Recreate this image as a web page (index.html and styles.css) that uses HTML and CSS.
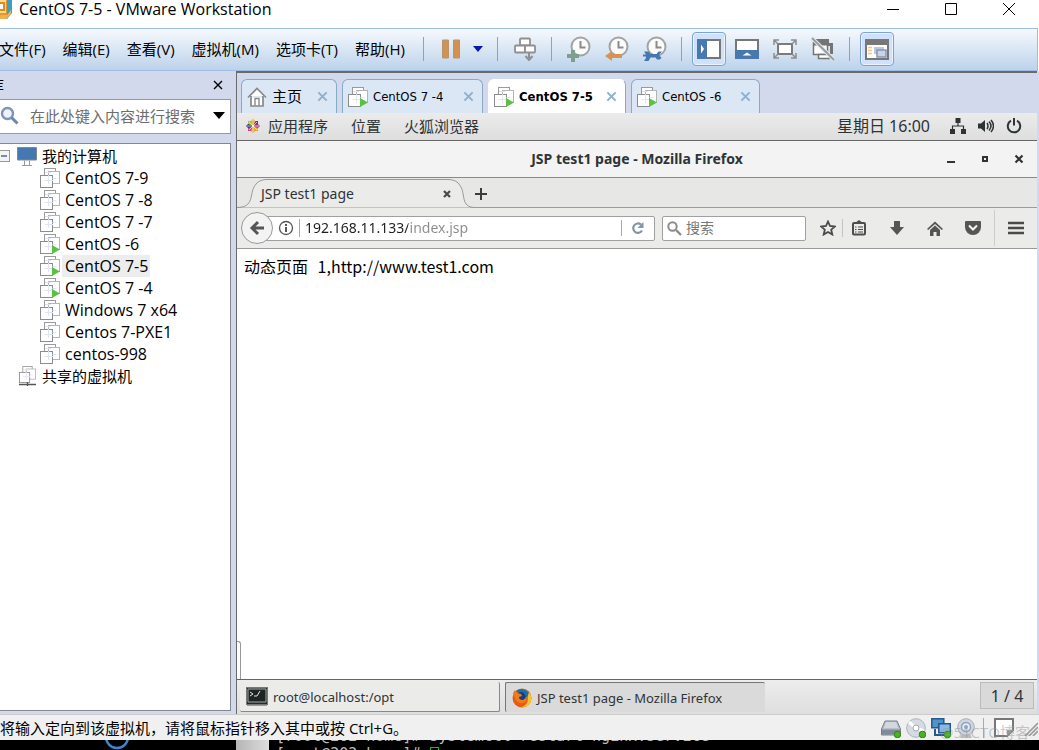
FILE: index.html
```html
<!DOCTYPE html>
<html lang="zh-CN">
<head>
<meta charset="utf-8">
<title>CentOS 7-5 - VMware Workstation</title>
<link rel="stylesheet" href="styles.css">
</head>
<body>
<svg class="defs" aria-hidden="true">
  <symbol id="vm" viewBox="0 0 20 20">
    <g fill="#fff" stroke="#9a9a9a" stroke-width="1"><rect x="4.500" y=".5" width="11" height="12"/><rect x="8.500" y="3.500" width="11" height="12" stroke="#b4b4b4"/><rect x=".5" y="7.500" width="12" height="12" stroke="#8c8c8c"/></g>
    <path d="M4.500 12.500h8.500M8.500 7v9M5 4.500h6M12.500 10.500h4" stroke="#dfe5f2" fill="none"/>
  </symbol>
  <symbol id="vm-on" viewBox="0 0 20 20">
    <use href="#vm"/><path d="M12 11l8 4.500-8 4.500z" fill="#5cc043"/>
  </symbol>
  <symbol id="cross" viewBox="0 0 12 12"><path d="M1.500 1.500l9 9M10.500 1.500l-9 9" stroke="#8db1d0" stroke-width="2.200" fill="none"/></symbol>
  <symbol id="clock" viewBox="0 0 26 26">
    <circle cx="14.500" cy="10.500" r="9" fill="#fbfbfb" stroke="#a3a3a3" stroke-width="2"/><path d="M14.500 5v6.500h5" fill="none" stroke="#8b8b8b" stroke-width="2"/>
  </symbol>
</svg>

<header class="titlebar">
  <svg class="app-icon" width="24" height="24" viewBox="0 0 24 24"><path d="M1 1h19l3 3v13l-5 6H1z" fill="#3aa0c8"/><path d="M1 1h17v18H1z" fill="#e8962a"/><path d="M3 4h14v13H3z" fill="#f8dd9a"/><path d="M6 6h10v9H6z" fill="#e58a18"/><path d="M9 8h5v5H9z" fill="#fff"/><path d="M1 19h17l4-5v4l-5 5H1z" fill="#f0b04a"/></svg>
  <h1>CentOS 7-5 - VMware Workstation</h1>
  <div class="win-controls">
    <button aria-label="最小化"><svg width="14" height="14"><path d="M1 7.500h12" stroke="#000"/></svg></button>
    <button aria-label="最大化"><svg width="14" height="14"><path d="M1.500 1.500h11v11h-11z" stroke="#000" fill="none"/></svg></button>
    <button aria-label="关闭"><svg width="14" height="14"><path d="M1 1l12 12M13 1L1 13" stroke="#000"/></svg></button>
  </div>
</header>

<div class="menubar">
  <nav class="menus">
    <button>文件(F)</button><button>编辑(E)</button><button>查看(V)</button><button>虚拟机(M)</button><button>选项卡(T)</button><button>帮助(H)</button>
  </nav>
  <div class="tools">
    <span class="sep"></span>
    <div class="group tight">
      <button aria-label="暂停"><svg width="20" height="20"><path d="M1.500 1h6v18h-6zM12.500 1h6v18h-6z" fill="#d29350" stroke="#b5956e"/></svg></button>
      <button class="slim" aria-label="电源选项"><svg width="10" height="6"><path d="M0 0h10l-5 6z" fill="#0a17b0"/></svg></button>
    </div>
    <span class="sep"></span>
    <button aria-label="发送按键"><svg width="24" height="24"><g fill="#fff" stroke="#8f8f8f" stroke-width="1.800"><rect x="7" y="1.500" width="10" height="7" rx="1"/><rect x="2" y="8.500" width="10" height="7" rx="1"/><rect x="12" y="8.500" width="10" height="7" rx="1"/></g><path d="M16 15v6M12.500 19l3.500 4 3.500-4" fill="none" stroke="#8f8f8f" stroke-width="2"/></svg></button>
    <span class="sep"></span>
    <div class="group">
      <button aria-label="拍摄快照"><svg width="26" height="26"><use href="#clock"/><path d="M5 14h4v4h4v4H9v4H5v-4H1v-4h4z" fill="#7c9f90"/></svg></button>
      <button aria-label="恢复快照"><svg width="26" height="26"><use href="#clock"/><path d="M1 20l7-5v3h10v4H8v3z" fill="#d5944f"/></svg></button>
      <button aria-label="管理快照"><svg width="26" height="26"><use href="#clock"/><path d="M2 15.500h4.500l2 2.500h6l2-2.500H20l-2.500 2.500v2l2 1.500-1.500 2h-3l-1.500-2H8.500l-2 3.500H2l2-3v-1.500H1v-2h3z" fill="#4778ad"/></svg></button>
    </div>
    <span class="sep"></span>
    <div class="group">
      <button class="on" aria-label="显示库"><svg width="24" height="20"><rect x="1" y="1" width="22" height="18" fill="#fff" stroke="#777" stroke-width="2"/><path d="M0 0h10v20H0z" fill="#4779ad"/><path d="M4 5.500l3 4.500-3 4.500z" fill="#fff"/></svg></button>
      <button aria-label="缩略图栏"><svg width="24" height="20"><rect x="1" y="1" width="22" height="18" fill="#fff" stroke="#777" stroke-width="2"/><path d="M0 11h24v9H0z" fill="#4779ad"/><path d="M7.500 16.500l4.500-3 4.500 3z" fill="#fff"/></svg></button>
      <button aria-label="全屏"><svg width="24" height="20"><rect x="5" y="5" width="14" height="10" fill="#fff" stroke="#7b7b7b" stroke-width="2"/><path d="M1 6V1h5M18 1h5v5M23 14v5h-5M6 19H1v-5M1 1l4 4M23 1l-4 4M1 19l4-4M23 19l-4-4" fill="none" stroke="#8d8d8d" stroke-width="1.500"/></svg></button>
      <button aria-label="Unity"><svg width="24" height="24"><path d="M5 2h13v4h4v11h-3V9H5z" fill="#747474"/><path d="M2.500 5.500h14v12h-14z" fill="#fff" stroke="#747474" stroke-width="1.500"/><path d="M2 4.500h15v4H2z" fill="#747474"/><path d="M7.500 17.500h11v4h-11z" fill="#fff" stroke="#747474" stroke-width="1.500"/><path d="M1 1l22 22" stroke="#e4e9ee" stroke-width="4"/><path d="M1 1l22 22" stroke="#979da2" stroke-width="2"/></svg></button>
    </div>
    <span class="sep"></span>
    <button class="on" aria-label="控制台视图"><svg width="24" height="21"><rect x="1" y="1" width="22" height="19" fill="#fdfdfd" stroke="#777" stroke-width="2"/><path d="M0 0h24v6H0z" fill="#777"/><path d="M3 8.500h4M3 11.500h4M3 14.500h4" stroke="#efcc78" stroke-width="1.500"/><path d="M9 8h10v7H9z" fill="#b9c9e2"/><path d="M12 11h9v7h-9z" fill="#c7d4ea" stroke="#8994ab" stroke-width="1.500"/></svg></button>
  </div>
</div>

<main class="work">
  <aside class="library">
    <div class="lib-head"><h2>库</h2><button aria-label="关闭库"><svg width="10" height="10"><path d="M1 1l8 8M9 1L1 9" stroke="#000" stroke-width="1.400"/></svg></button></div>
    <div class="lib-search">
      <svg width="19" height="19"><circle cx="7.500" cy="7.500" r="5.500" fill="#eef3f9" stroke="#7e95b6" stroke-width="2.400"/><path d="M11.500 11.500l6 6" stroke="#6e86ab" stroke-width="3"/></svg>
      <input type="text" aria-label="搜索库" placeholder="在此处键入内容进行搜索">
      <button aria-label="搜索选项"><svg width="12" height="7"><path d="M0 0h12L6 7z"/></svg></button>
    </div>
    <div class="tree">
      <div class="row root"><svg class="minus" width="10" height="12"><rect x="-.5" y=".5" width="10" height="11" fill="#f3f3f3" stroke="#999"/><path d="M1 6h6" stroke="#3c5aa8" stroke-width="1.400"/></svg><svg width="20" height="19"><path d="M.5.500h19v12.500H.5z" fill="#4478b0" stroke="#888"/><path d="M7.500 13.500v4.500M12.500 13.500v4.500M5 18.500h10" stroke="#999"/></svg><span>我的计算机</span></div>
      <ul>
        <li class="row"><svg width="20" height="20"><use href="#vm"/></svg><span>CentOS 7-9</span></li>
        <li class="row"><svg width="20" height="20"><use href="#vm"/></svg><span>CentOS 7 -8</span></li>
        <li class="row"><svg width="20" height="20"><use href="#vm"/></svg><span>CentOS 7 -7</span></li>
        <li class="row"><svg width="20" height="20"><use href="#vm-on"/></svg><span>CentOS -6</span></li>
        <li class="row sel"><svg width="20" height="20"><use href="#vm-on"/></svg><span>CentOS 7-5</span></li>
        <li class="row"><svg width="20" height="20"><use href="#vm-on"/></svg><span>CentOS 7 -4</span></li>
        <li class="row"><svg width="20" height="20"><use href="#vm"/></svg><span>Windows 7 x64</span></li>
        <li class="row"><svg width="20" height="20"><use href="#vm"/></svg><span>Centos 7-PXE1</span></li>
        <li class="row"><svg width="20" height="20"><use href="#vm"/></svg><span>centos-998</span></li>
      </ul>
      <div class="row shared"><svg width="20" height="20"><svg width="17" height="17"><use href="#vm"/></svg><path d="M0 18.500h17M8.500 16v4" stroke="#555" stroke-width="1.400"/></svg><span>共享的虚拟机</span></div>
    </div>
  </aside>

  <section class="console">
    <div class="vm-tabs">
      <div class="vm-tab home"><svg width="20" height="20"><path d="M1 10.500l9-9 9 9M4 9v10h12V9" fill="#fff" stroke="#888" stroke-width="1.700"/><path d="M8 18.500v-7h4v7" fill="none" stroke="#888" stroke-width="1.400"/></svg><span>主页</span><button aria-label="关闭"><svg width="11" height="11"><use href="#cross"/></svg></button></div>
      <div class="vm-tab a"><svg width="20" height="20"><use href="#vm-on"/></svg><span>CentOS 7 -4</span><button aria-label="关闭"><svg width="11" height="11"><use href="#cross"/></svg></button></div>
      <div class="vm-tab b active"><svg width="20" height="20"><use href="#vm-on"/></svg><span>CentOS 7-5</span><button aria-label="关闭"><svg width="11" height="11"><use href="#cross"/></svg></button></div>
      <div class="vm-tab c"><svg width="20" height="20"><use href="#vm-on"/></svg><span>CentOS -6</span><button aria-label="关闭"><svg width="11" height="11"><use href="#cross"/></svg></button></div>
    </div>

    <div class="gnome-bar">
      <svg width="14" height="14" viewBox="0 0 14 14"><path d="M7 0l2 2v4H5V2z" fill="#e9a52c"/><path d="M14 7l-2 2H8V5h4z" fill="#a33a8a"/><path d="M7 14l-2-2V8h4v4z" fill="#e9a52c"/><path d="M0 7l2-2h4v4H2z" fill="#3b2f83"/><path d="M2 2h3l1.500 4.500L2 5z" fill="#9ccb3b"/><path d="M12 2H9.500L7.500 6.500 12 5z" fill="#932279"/><path d="M12 12H9l-1.500-4.500L12 9z" fill="#e9a52c"/><path d="M2 12h3l1.500-4.500L2 9z" fill="#c74680"/><path d="M7 1v12M1 7h12M3 3l8 8M11 3l-8 8" stroke="#f3f3f3" stroke-width=".7"/></svg>
      <button>应用程序</button><button>位置</button><button>火狐浏览器</button>
      <time>星期日 16:00</time>
      <svg width="16" height="16"><path d="M5.500 0h5v5h-5zM0 11h5v5H0zM11 11h5v5h-5z" fill="#2e3436"/><path d="M8 5v3M2.500 11V8h11v3" fill="none" stroke="#2e3436" stroke-width="1.200"/></svg>
      <svg width="16" height="14"><path d="M0 4.500h3L7 1v12L3 9.500H0z" fill="#2e3436"/><path d="M9 4q2 3 0 6M11 2.500q4 4.500 0 9M13 1q5 6 0 12" fill="none" stroke="#2e3436" stroke-width="1.500"/></svg>
      <svg width="16" height="16"><path d="M5 2.700a6.200 6.200 0 1 0 6 0M8 0v7.500" fill="none" stroke="#2e3436" stroke-width="2"/></svg>
    </div>

    <div class="ff-title">
      <h3>JSP test1 page - Mozilla Firefox</h3>
      <div class="ff-controls">
        <button aria-label="最小化"><svg width="10" height="10"><path d="M1 8h8" stroke="#2e3436" stroke-width="2"/></svg></button>
        <button aria-label="还原"><svg width="10" height="10"><path d="M3 3h4v4H3z" fill="none" stroke="#2e3436" stroke-width="2"/></svg></button>
        <button aria-label="关闭"><svg width="10" height="10"><path d="M1.500 1.500l7 7M8.500 1.500l-7 7" stroke="#2e3436" stroke-width="2.200"/></svg></button>
      </div>
    </div>

    <div class="ff-tabs">
      <div class="ff-tab">
        <svg class="shape" width="238" height="30" viewBox="0 0 238 30" aria-hidden="true"><path d="M0 29.500c18 0 12-14 18-22Q21 2 29 1.500h183q8 .5 11 6c6 8 0 22 15 22" fill="#ebebea" stroke="#97999b"/></svg>
        <span>JSP test1 page</span>
        <button aria-label="关闭标签页"><svg width="8" height="8"><path d="M1 1l6 6M7 1L1 7" stroke="#4a4a4a" stroke-width="2.200"/></svg></button>
      </div>
      <button class="new-tab" aria-label="新建标签页"><svg width="12" height="12"><path d="M6 0v12M0 6h12" stroke="#3c3c3c" stroke-width="2"/></svg></button>
    </div>

    <div class="ff-nav">
      <button class="back" aria-label="后退"><svg width="16" height="16"><path d="M9 2L3 8l6 6M3 8h12" fill="none" stroke="#555" stroke-width="3"/></svg></button>
      <div class="url">
        <svg width="16" height="16"><circle cx="8" cy="8" r="6.500" fill="none" stroke="#555" stroke-width="1.300"/><path d="M8 7v5M8 4v2" stroke="#444" stroke-width="1.800"/></svg>
        <input type="text" aria-label="地址" value="192.168.11.133/index.jsp">
        <button aria-label="刷新"><svg width="14" height="14"><path d="M11 9.500A4.700 4.700 0 1 1 10 3.600" fill="none" stroke="#8595a5" stroke-width="2.200"/><path d="M12.500 1v6h-6z" fill="#8595a5"/></svg></button>
      </div>
      <div class="search">
        <svg width="15" height="15"><circle cx="5.500" cy="5.500" r="4.200" fill="none" stroke="#8c8c8c" stroke-width="2"/><path d="M9 9l5 5" stroke="#8c8c8c" stroke-width="2.400"/></svg>
        <input type="text" aria-label="搜索" placeholder="搜索">
      </div>
      <div class="ff-icons">
        <button class="star" aria-label="书签"><svg width="16" height="16"><path d="M8 1.500l2 4.500 4.800.5-3.600 3.200 1.100 4.800L8 12l-4.300 2.500 1.100-4.800L1.200 6.500 6 6z" fill="none" stroke="#4a4a4a" stroke-width="1.800"/></svg></button>
        <button aria-label="书签菜单"><svg width="14" height="16"><rect x="1" y="3" width="12" height="11.500" rx="1" fill="none" stroke="#4d4d4d" stroke-width="2"/><path d="M3 3l4-3 4 3v1H3z" fill="#4d4d4d"/><path d="M3 7h1.500M6 7h5M3 9.500h1.500M6 9.500h5M3 12h1.500M6 12h5" stroke="#4d4d4d" stroke-width="1.200"/></svg></button>
        <button aria-label="下载"><svg width="14" height="14"><path d="M4 0h6v6h4l-7 8-7-8h4z" fill="#555"/></svg></button>
        <button aria-label="主页"><svg width="16" height="15"><path d="M0 8l8-7.500L16 8l-1.200 1L8 3 1.200 9z" fill="#555"/><path d="M3 9l5-4.500L13 9v6h-3.500v-4h-3v4H3z" fill="#555"/></svg></button>
        <button aria-label="Pocket"><svg width="16" height="14"><path d="M1 0h14q1 0 1 1v5a8 8 0 0 1-16 0V1q0-1 1-1z" fill="#555"/><path d="M4 4.500L8 8.500l4-4" fill="none" stroke="#f5f5f5" stroke-width="2"/></svg></button>
        <button class="burger" aria-label="菜单"><svg width="16" height="14"><path d="M0 2h16M0 7h16M0 12h16" stroke="#4a4a4a" stroke-width="2.400"/></svg></button>
      </div>
    </div>

    <article class="page"><p>动态页面 <span>1,http://www.test1.com</span></p></article>

    <div class="taskbar">
      <button class="task"><svg width="22" height="19"><rect x=".5" y=".5" width="21" height="17" fill="#242a29" stroke="#777"/><path d="M2 2h18v13H2z" fill="#1d2423" stroke="#a5aaa8"/><path d="M4 5l3 2-3 2M8 9h3l3-5" stroke="#dfe5e2" fill="none"/><path d="M1 18.500h20" stroke="#999"/></svg><span>root@localhost:/opt</span></button>
      <button class="task cur"><svg width="20" height="20"><circle cx="10" cy="10" r="9.500" fill="#e65a16"/><path d="M4 3a9.300 9.300 0 0 1 13 2q3 5 1 9-2-1-3-5z" fill="#0c75b5"/><path d="M17 4q4 5 1.500 10.500-3 5-8.500 4.500 7-3 5.500-10z" fill="#f7c22b"/><path d="M6 5q3-2 6 0l2 4-3 4q-4 0-6-4z" fill="#173f80"/><path d="M1 5l2-3 2 3 4 1 1 2-3 1q0 3 4 3 3-1 3-3 2 5-3 6-6 1-8-5z" fill="#ee7d18"/></svg><span>JSP test1 page - Mozilla Firefox</span></button>
      <span class="pager">1 / 4</span>
    </div>
  </section>
</main>

<footer class="status">
  <p>要将输入定向到该虚拟机，请将鼠标指针移入其中或按 Ctrl+G。</p>
  <div class="devices">
    <svg width="20" height="20"><path d="M4 3h12l3.500 8v6H.5v-6z" fill="#b7bfc8" stroke="#75808b"/><path d="M1 11.500h18v5H1z" fill="#7f8b99"/><path d="M5 4h10l2 6H3z" fill="#d2d8de"/><circle cx="16.500" cy="16.500" r="3.300" fill="#48b31e" stroke="#2f8518"/></svg>
    <svg width="20" height="20"><circle cx="10" cy="10" r="9.300" fill="#d4dce2" stroke="#a9b3bb"/><path d="M10 10L3 4M10 10l8 3" stroke="#fff" stroke-width="3"/><circle cx="10" cy="10" r="3" fill="#fff" stroke="#9fa9b2"/><circle cx="16.500" cy="16.500" r="3.300" fill="#48b31e" stroke="#2f8518"/></svg>
    <svg width="20" height="20"><path d="M.8.800h12v9H.8z" fill="#4f93cb" stroke="#27598a" stroke-width="1.500"/><path d="M4 11v6h6" fill="none" stroke="#27598a" stroke-width="2"/><path d="M7.800 5.800h11.500v9H7.800z" fill="#86b9e3" stroke="#1f568b" stroke-width="1.500"/><path d="M9.500 17h7" stroke="#27598a" stroke-width="2"/><circle cx="16.500" cy="16.500" r="3.300" fill="#48b31e" stroke="#2f8518"/></svg>
    <svg width="20" height="20"><path d="M6 16h8l2 4H4z" fill="#bbb"/><circle cx="10" cy="9" r="8.300" fill="#cdd6de" stroke="#a6b0b9"/><circle cx="10" cy="9" r="4.500" fill="#e7edf3" stroke="#8ba4bd" stroke-width="1.500"/><circle cx="10" cy="9" r="2" fill="#8ba6c0"/></svg>
  </div>
  <svg class="note" width="20" height="19"><path d="M1 1h18v11l-6 6H1z" fill="#fff" stroke="#777" stroke-width="2"/><path d="M13 18v-6h6z" fill="#999"/></svg>
  <svg class="grip" width="14" height="16"><path d="M1 16L14 3M5 16l9-9M9 16l5-5" stroke="#999" stroke-width="1.600"/></svg>
  <span class="mark">@51CTO博客</span>
</footer>

<div class="behind">
  <svg class="ring" width="26" height="10"><circle cx="13" cy="-3" r="11" fill="none" stroke="#3b86cc" stroke-width="2.500"/></svg>
  <div class="edge"></div>
  <pre class="term">[root@202 home]# systemctl restart nginx.service
[root@202 home]# <i></i></pre>
</div>
</body>
</html>
```
FILE: styles.css
```css
* { box-sizing: border-box; }
body {
  margin: 0;
  height: 100vh;
  display: flex;
  flex-direction: column;
  overflow: hidden;
  background: #fff;
  color: #000;
  font: 15px/22px "Open Sans", "Noto Sans CJK SC", sans-serif;
}
svg { display: block; flex: none; }
.defs { position: absolute; width: 0; height: 0; }
button {
  display: flex;
  align-items: center;
  justify-content: center;
  padding: 0;
  border: 0;
  background: none;
  color: inherit;
  font: inherit;
  white-space: nowrap;
}
input {
  min-width: 0;
  padding: 0;
  border: 0;
  outline: 0;
  background: none;
  font: inherit;
}
h1, h2, h3, p, ul, pre { margin: 0; padding: 0; font-size: inherit; font-weight: normal; }
ul { list-style: none; }

/* Window title */
.titlebar { display: flex; flex: none; height: 28px; }
.app-icon { margin: -4px 6px 0 -11px; }
h1 { flex: 1; font-size: 16px; line-height: 18px; }
.win-controls { display: flex; height: 18px; gap: 30px; padding-right: 16px; }
.win-controls button { width: 28px; }

/* Menu and toolbar */
.menubar {
  display: flex;
  flex: none;
  align-items: center;
  height: 43px;
  margin-right: 1px;
  padding-bottom: 1px;
  border: 1px solid #9dbde2;
  border-left: 0;
  background: linear-gradient(#f6f9fd, #dce8f5 45%, #bdd2ec);
}
.menus { display: flex; flex: none; gap: 17px; margin: 0 18px 0 -1px; }
.tools, .group { display: flex; align-items: center; }
.group { gap: 4px; }
.group.tight { gap: 0; }
.tools button { width: 34px; height: 34px; }
.tools button.slim { width: 20px; }
.tools button.on { border: 1px solid #7ba3d3; border-radius: 4px; background: #cfe1fb; box-shadow: inset 0 0 0 1px #eaf3fe; }
.sep { width: 1px; height: 24px; margin: 0 10px 0 9px; background: #7fa5d2; }
.tools > .sep:first-child { margin-left: 0; }

/* Library */
.work { display: flex; flex: 1; min-height: 0; background: #d3d9ec; }
.library { display: flex; flex-direction: column; flex: none; width: 231px; margin: 0 5px 3px 0; }
.lib-head { display: flex; flex: none; justify-content: space-between; height: 28px; padding-right: 7px; line-height: 28px; }
.lib-head h2 { margin-left: -11px; }
.lib-head button { width: 12px; }
.lib-search {
  display: flex;
  flex: none;
  align-items: center;
  gap: 11px;
  height: 35px;
  margin-bottom: 9px;
  padding: 0 5px 2px 0;
  border: 1px solid #999;
  border-left: 0;
  background: #fff;
}
.lib-search input { flex: 1; }
.lib-search input::placeholder { color: #6d6d6d; }
.tree { flex: 1; padding-top: 1px; border: 1px solid #85888f; border-left: 0; background: #fff; white-space: nowrap; }
.row { display: flex; align-items: center; height: 22px; padding-left: 40px; }
.row span { padding: 0 2px 0 3px; margin-left: 2px; line-height: 22px; }
li.row { font-size: 16px; }
.row.root { padding-left: 0; }
.row.root svg + svg { margin-left: 7px; }
.row.shared { padding-left: 19px; }
.row.root span, .row.shared span { margin-left: 0; padding-left: 5px; }
.row.shared span { padding-left: 3px; }
.row.sel span { background: #ededed; }

/* Virtual machine console */
.console {
  display: flex;
  flex: 1;
  flex-direction: column;
  min-width: 0;
  margin-right: 2px;
  border: solid #6a6a6a;
  border-width: 2px 0 0 1px;
  background: #fff;
}
.vm-tabs { display: flex; flex: none; gap: 5px; height: 40px; padding: 6px 0 0 4px; background: #d3d9ec; font: 13px/20px "DejaVu Sans Condensed", "DejaVu Sans", "Noto Sans CJK SC", sans-serif; }
.vm-tab {
  display: flex;
  align-items: center;
  gap: 5px;
  width: 141px;
  padding: 0 8px 0 5px;
  border: 1px solid #89a9c9;
  border-bottom: 0;
  border-radius: 6px 6px 0 0;
  background: #dbe7f5;
  white-space: nowrap;
}
.vm-tab span { flex: 1; }
.vm-tab.home { width: 96px; font-size: 15px; }
.vm-tab.b { width: 138px; }
.vm-tab.c { width: 129px; }
.vm-tab.active { background: #fff; border-left-color: #fff; border-top-color: #fff; font-weight: bold; }

.gnome-bar {
  display: flex;
  flex: none;
  align-items: center;
  height: 28px;
  padding: 0 15px 2px 9px;
  border-bottom: 1px solid #666;
  background: linear-gradient(#ebebeb, #dedede);
  color: #2e3436;
  font-family: "Noto Sans", "Noto Sans CJK SC", sans-serif;
}
.gnome-bar button { margin-right: 23px; }
.gnome-bar svg + button { margin-left: 8px; }
.gnome-bar time { margin-left: auto; padding-right: 20px; font-size: 16px; }
.gnome-bar svg + svg { margin-left: 12px; }

.ff-title, .ff-tabs, .ff-nav, .taskbar { color: #2e3436; font-family: "Noto Sans", "Noto Sans CJK SC", sans-serif; font-size: 14px; }
.ff-title { display: flex; flex: none; align-items: center; height: 37px; padding-left: 98px; border-bottom: 1px solid #888a85; background: #f3f3f3; }
.ff-title h3 { flex: 1; text-align: center; font-weight: bold; }
.ff-controls { display: flex; gap: 10px; padding-right: 6px; }
.ff-controls button { width: 24px; height: 24px; }

.ff-tabs { display: flex; flex: none; height: 30px; background: #e7e7e5; box-shadow: inset 0 -1px #999b9c; }
.ff-tab { position: relative; display: flex; align-items: center; flex: none; justify-content: space-between; width: 238px; padding: 2px 22px 0 24px; }
.ff-tab .shape { position: absolute; left: 0; top: 0; }
.ff-tab span, .ff-tab button { position: relative; }
.ff-tab button { width: 12px; height: 20px; }
.new-tab { width: 12px; padding-top: 2px; }

.ff-nav { display: flex; flex: none; align-items: center; height: 41px; padding: 0 2px 0 4px; border-bottom: 1px solid #999; background: #ebebea; }
.back { position: relative; flex: none; width: 32px; height: 32px; margin-right: -11px; border: 1px solid #999; border-radius: 50%; background: #f3f3f3; }
.url, .search { display: flex; align-items: center; height: 25px; border: 1px solid #a0a0a0; border-radius: 2px; background: #fff; }
.url { flex: 1; min-width: 0; padding-left: 15px; }
.url input { flex: 1; margin-left: 5px; padding-left: 5px; border-left: 1px solid #aaa; background: linear-gradient(90deg, #1e1e1e 108px, #8b8b8b 108px); background-clip: text; color: transparent; line-height: 18px; }
.url button { width: 33px; height: 16px; border-left: 1px solid #aaa; }
.search { flex: none; width: 144px; margin-left: 7px; padding-left: 4px; gap: 4px; }
.search input { flex: 1; }
.search input::placeholder { color: #777; }
.ff-icons { display: flex; flex: none; margin-left: 3px; }
.ff-icons button { width: 38px; height: 36px; }
.ff-icons .star { width: 34px; padding-left: 4px; margin-right: -3px; }
.ff-icons .star + button { background: linear-gradient(#c4c4c4, #c4c4c4) 2px 50% / 1px 18px no-repeat; }
.ff-icons .burger { margin-left: 1px; padding-left: 4px; width: 42px; background: linear-gradient(#ccc, #ccc) 1px 50% / 1px 100% no-repeat; }

.page { position: relative; flex: 1; padding: 6px 7px; font: 16px/22px "Noto Sans CJK SC", sans-serif; }
.page span { margin-left: 6px; }
/* Corner of a window lying under the browser */
.page::after { content: ""; position: absolute; left: 0; bottom: 0; width: 3px; height: 37px; border: solid #999; border-width: 1px 1px 0 0; border-radius: 0 3px 0 0; }

.taskbar { display: flex; flex: none; gap: 5px; height: 35px; padding: 2px 3px 2px 3px; border-top: 1px solid #666; background: linear-gradient(#ededed, #dedede); font-size: 13px; }
.task { flex: 0 1 260px; justify-content: flex-start; gap: 5px; padding-left: 6px; border: solid #888; border-width: 0 1px 1px 0; border-radius: 2px; background: #ebebea; }
.task.cur { border-color: #777; border-width: 1px 0 0 1px; background: #dadada; }
.pager { margin: 0 0 3px auto; width: 54px; border: 1px solid #bbb; background: #d9d9d9; font-size: 16px; line-height: 26px; text-align: center; }

/* Status line */
.status { position: relative; display: flex; flex: none; align-items: center; height: 26px; padding-right: 1px; border-top: 1px solid #ccc; background: #f0f0f0; }
.status p { flex: 1; margin-left: -15px; white-space: nowrap; }
.devices { display: flex; gap: 5px; margin-right: 10px; padding-right: 7px; border-right: 1px solid #aaa; }
.note { margin-right: 10px; }
.mark { position: absolute; right: 9px; top: 7px; color: rgba(150, 150, 150, .5); font-size: 15px; line-height: 20px; }

/* Desktop visible under the window */
.behind { display: flex; flex: none; height: 10px; overflow: hidden; background: #000; }
.ring { margin: 0 106px 0 104px; }
.edge { width: 33px; background: linear-gradient(90deg, #b5b5b5, #ddd); }
.term { margin: -13px 0 0 7px; color: #bbb; font: 15px/18px "DejaVu Sans Mono", monospace; }
.term i { display: inline-block; width: 9px; height: 14px; border: 1px solid #0c0; vertical-align: top; margin-top: 2px; }
```
